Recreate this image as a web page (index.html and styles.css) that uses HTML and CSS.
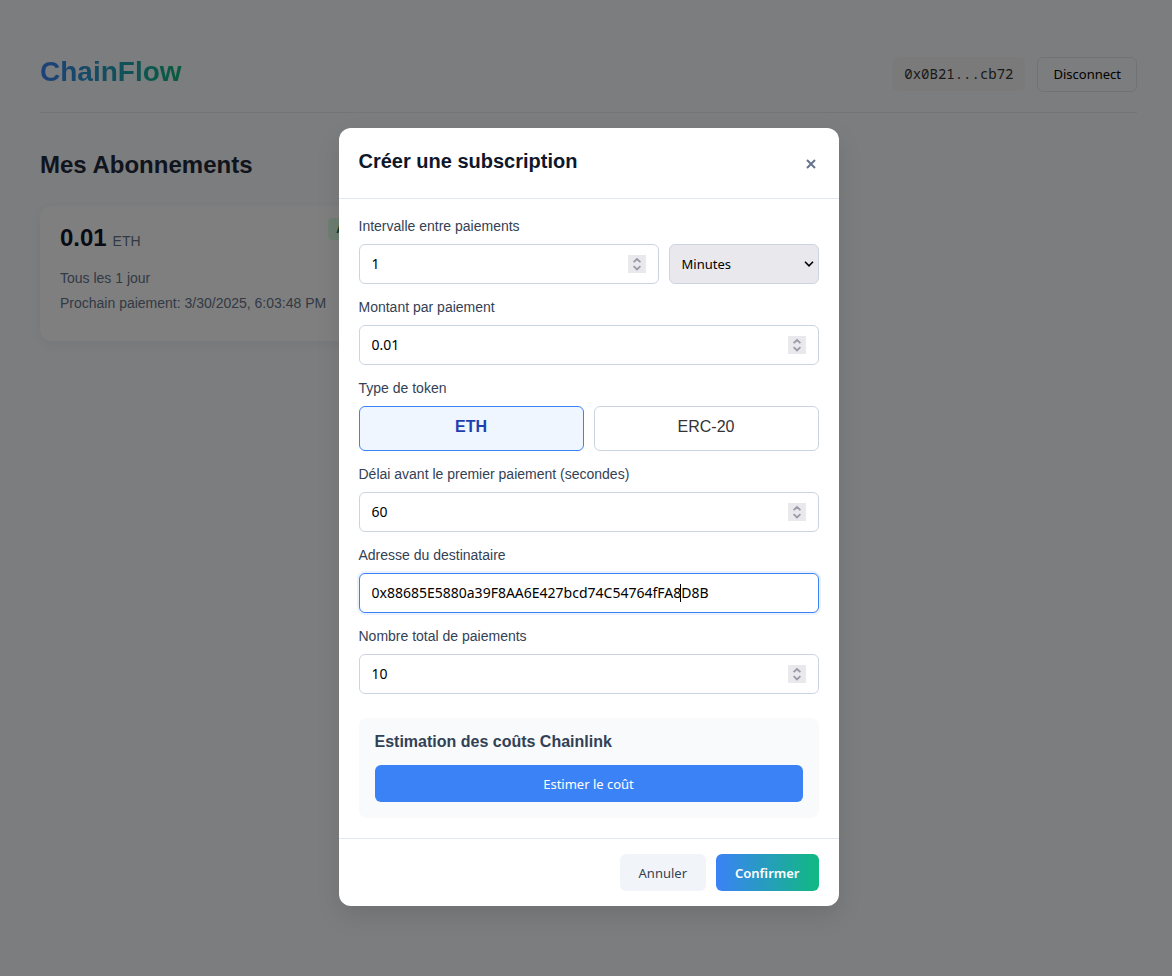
FILE: index.html
```html
<!DOCTYPE html>
<html lang="fr">
<head>
<meta charset="utf-8">
<title>ChainFlow</title>
<meta name="viewport" content="width=device-width, initial-scale=1">
<link rel="stylesheet" href="styles.css">
</head>
<body>
<svg class="sprite" aria-hidden="true">
  <symbol id="spin" viewBox="0 0 18 18">
    <path d="M5.6 7.2 9 4l3.4 3.2M5.6 11.2 9 14.4l3.4-3.2" fill="none" stroke="#9a99a5" stroke-width="1.8"/>
  </symbol>
</svg>
<div class="app">
  <header class="topbar">
    <h1 class="brand">ChainFlow</h1>
    <div class="wallet">
      <span class="address">0x0B21...cb72</span>
      <button class="disconnect" type="button">Disconnect</button>
    </div>
  </header>
  <main>
    <h2 class="page-title">Mes Abonnements</h2>
    <div class="cards">
      <article class="card">
        <span class="status">Active</span>
        <p class="amount"><strong>0.01</strong> <span>ETH</span></p>
        <p class="detail">Tous les 1 jour</p>
        <p class="detail">Prochain paiement: 3/30/2025, 6:03:48 PM</p>
      </article>
    </div>
  </main>
</div>
<div class="overlay">
  <form class="modal" role="dialog" aria-labelledby="modal-title">
    <div class="modal-head">
      <h3 id="modal-title">Créer une subscription</h3>
      <button class="close" type="button" aria-label="Fermer">
        <svg viewBox="0 0 10 10"><path d="M1 1l8 8M9 1L1 9" fill="none" stroke="currentColor" stroke-width="2"/></svg>
      </button>
    </div>
    <div class="modal-body">
      <div class="group">
        <label for="interval">Intervalle entre paiements</label>
        <div class="row">
          <div class="field wide"><input id="interval" type="number" value="1"><svg class="spin"><use href="#spin"/></svg></div>
          <div class="field unit">
            <select aria-label="Unité"><option>Minutes</option></select>
            <svg class="chevron" viewBox="0 0 10 6"><path d="M1 .8l4 4 4-4" fill="none" stroke="#000" stroke-width="1.6"/></svg>
          </div>
        </div>
      </div>
      <div class="group">
        <label for="amount">Montant par paiement</label>
        <div class="field"><input id="amount" type="number" step="0.01" value="0.01"><svg class="spin"><use href="#spin"/></svg></div>
      </div>
      <div class="group">
        <span class="label">Type de token</span>
        <div class="row">
          <button class="token selected" type="button" aria-pressed="true">ETH</button>
          <button class="token" type="button" aria-pressed="false">ERC-20</button>
        </div>
      </div>
      <div class="group">
        <label for="delay">Délai avant le premier paiement (secondes)</label>
        <div class="field"><input id="delay" type="number" value="60"><svg class="spin"><use href="#spin"/></svg></div>
      </div>
      <div class="group">
        <label for="recipient">Adresse du destinataire</label>
        <div class="field focused"><input id="recipient" type="text" spellcheck="false" value="0x88685E5880a39F8AA6E427bcd74C54764fFA8D8B"><span class="caret"></span></div>
      </div>
      <div class="group">
        <label for="count">Nombre total de paiements</label>
        <div class="field"><input id="count" type="number" value="10"><svg class="spin"><use href="#spin"/></svg></div>
      </div>
      <section class="estimate">
        <h4>Estimation des coûts Chainlink</h4>
        <button class="btn primary" type="button">Estimer le coût</button>
      </section>
    </div>
    <div class="modal-foot">
      <button class="btn cancel" type="button">Annuler</button>
      <button class="btn confirm" type="submit">Confirmer</button>
    </div>
  </form>
</div>
</body>
</html>
```
FILE: styles.css
```css
* { box-sizing: border-box; }
body {
  margin: 0;
  min-height: 100vh;
  background: #f8fafc;
  color: #333;
  font: 16px/1.2 "Liberation Sans", Arial, sans-serif;
}
h1, h2, h3, h4, p { margin: 0; }
button, input, select { font: 13px/19px "Noto Sans", sans-serif; }
button { cursor: pointer; }
.sprite { display: none; }

.app { padding: 40px 35px 40px 40px; }
.topbar {
  display: flex;
  align-items: center;
  justify-content: space-between;
  height: 73px;
  padding-bottom: 4px;
  border-bottom: 1px solid #e2e8f0;
}
.brand {
  font-size: 28px;
  line-height: 32px;
  margin-bottom: 5px;
  background: linear-gradient(90deg, #3b82f6, #10b981);
  -webkit-background-clip: text;
  background-clip: text;
  color: transparent;
}
.wallet { display: flex; align-items: center; gap: 12px; }
.address {
  padding: 8px 12px;
  border-radius: 6px;
  background: #f5f5f5;
  color: #333;
  font: 14px/18px "Noto Sans Mono", "DejaVu Sans Mono", monospace;
}
.disconnect {
  padding: 7px 15px;
  border: 1px solid #e5e5e5;
  border-radius: 6px;
  background: transparent;
  color: #000;
}
.page-title { margin: 38px 0 27px; font-size: 24px; line-height: 28px; color: #1e293b; }
.cards { display: grid; grid-template-columns: repeat(auto-fill, minmax(340px, 1fr)); gap: 20px; }
.card {
  position: relative;
  padding: 16px 20px 29px;
  border-radius: 12px;
  background: #fff;
  box-shadow: 0 4px 12px rgba(0, 0, 0, .05);
}
.amount { margin-bottom: 13px; font-size: 14px; line-height: 32px; color: #64748b; }
.amount strong { font-size: 24px; color: #0f172a; margin-right: 2px; }
.detail { font-size: 14px; line-height: 17px; color: #64748b; }
.detail + .detail { margin-top: 8px; }
.status {
  position: absolute;
  top: 12px;
  right: 12px;
  padding: 4px 8px;
  border-radius: 4px;
  background: #dcfce7;
  color: #166534;
  font-size: 12px;
  line-height: 14px;
  font-weight: 700;
}

.overlay {
  position: absolute;
  inset: 0;
  min-height: 100%;
  display: flex;
  justify-content: center;
  align-items: flex-start;
  padding: 128px 0 40px 5px;
  background: rgba(0, 0, 0, .5);
}
.modal {
  width: 500px;
  max-width: 90%;
  border-radius: 12px;
  background: #fff;
  box-shadow: 0 10px 25px rgba(0, 0, 0, .1);
}
.modal-head {
  display: flex;
  align-items: center;
  justify-content: space-between;
  padding: 21px 20px 19px;
  border-bottom: 1px solid #e2e8f0;
}
.modal-head h3 { font-size: 20px; line-height: 24px; padding-bottom: 6px; color: #0f172a; }
.close { display: flex; padding: 3px; border: 0; background: none; color: #64748b; }
.close svg { width: 10px; height: 10px; }
.modal-body { padding: 20px; }
.group { margin-bottom: 16px; }
label, .label {
  display: block;
  margin-bottom: 10px;
  font-size: 14px;
  line-height: 15px;
  color: #334155;
}
.row { display: flex; gap: 10px; }
.field {
  position: relative;
  display: flex;
  align-items: center;
  height: 40px;
  padding: 0 12px;
  border: 1px solid #cbd5e1;
  border-radius: 6px;
  background: #fff;
}
.field.wide { flex: 1; }
.field.unit { width: 150px; padding: 0; background: #e9e9ed; }
.field.focused { border-color: #3b82f6; box-shadow: 0 0 0 2px rgba(59, 130, 246, .1); }
.field input {
  flex: 1;
  min-width: 0;
  padding: 0 0 2px;
  border: 0;
  outline: 0;
  background: none;
  color: #000;
  font-size: 14px;
  appearance: textfield;
}
.field input::-webkit-inner-spin-button { appearance: none; margin: 0; }
.spin { width: 18px; height: 18px; background: #e9e9ed; }
.field select {
  width: 100%;
  height: 100%;
  padding: 0 24px 0 12px;
  border: 0;
  background: none;
  color: #000;
  appearance: none;
}
.chevron { position: absolute; right: 4px; width: 10px; height: 6px; pointer-events: none; }
.caret { position: absolute; left: 320px; width: 1px; height: 18px; background: #000; }
.token {
  flex: 1;
  padding: 10px 12px 13px;
  border: 1px solid #cbd5e1;
  border-radius: 6px;
  background: #fff;
  color: #333;
  font: 16px/20px "Liberation Sans", Arial, sans-serif;
}
.token.selected { border-color: #3b82f6; background: #eff6ff; color: #1e40af; font-weight: 700; }
.estimate { margin-top: 24px; padding: 15px 16px 16px; border-radius: 8px; background: #f8fafc; }
.estimate h4 { margin-bottom: 14px; font-size: 16px; line-height: 18px; color: #334155; }
.btn { padding: 10px 19px 8px; border: 0; border-radius: 6px; }
.primary { width: 100%; background: #3b82f6; color: #fff; }
.modal-foot {
  display: flex;
  justify-content: flex-end;
  gap: 10px;
  padding: 15px 20px;
  border-top: 1px solid #e2e8f0;
}
.cancel { background: #f1f5f9; color: #334155; }
.confirm { background: linear-gradient(90deg, #3b82f6, #10b981); color: #fff; font-weight: 600; }
```
